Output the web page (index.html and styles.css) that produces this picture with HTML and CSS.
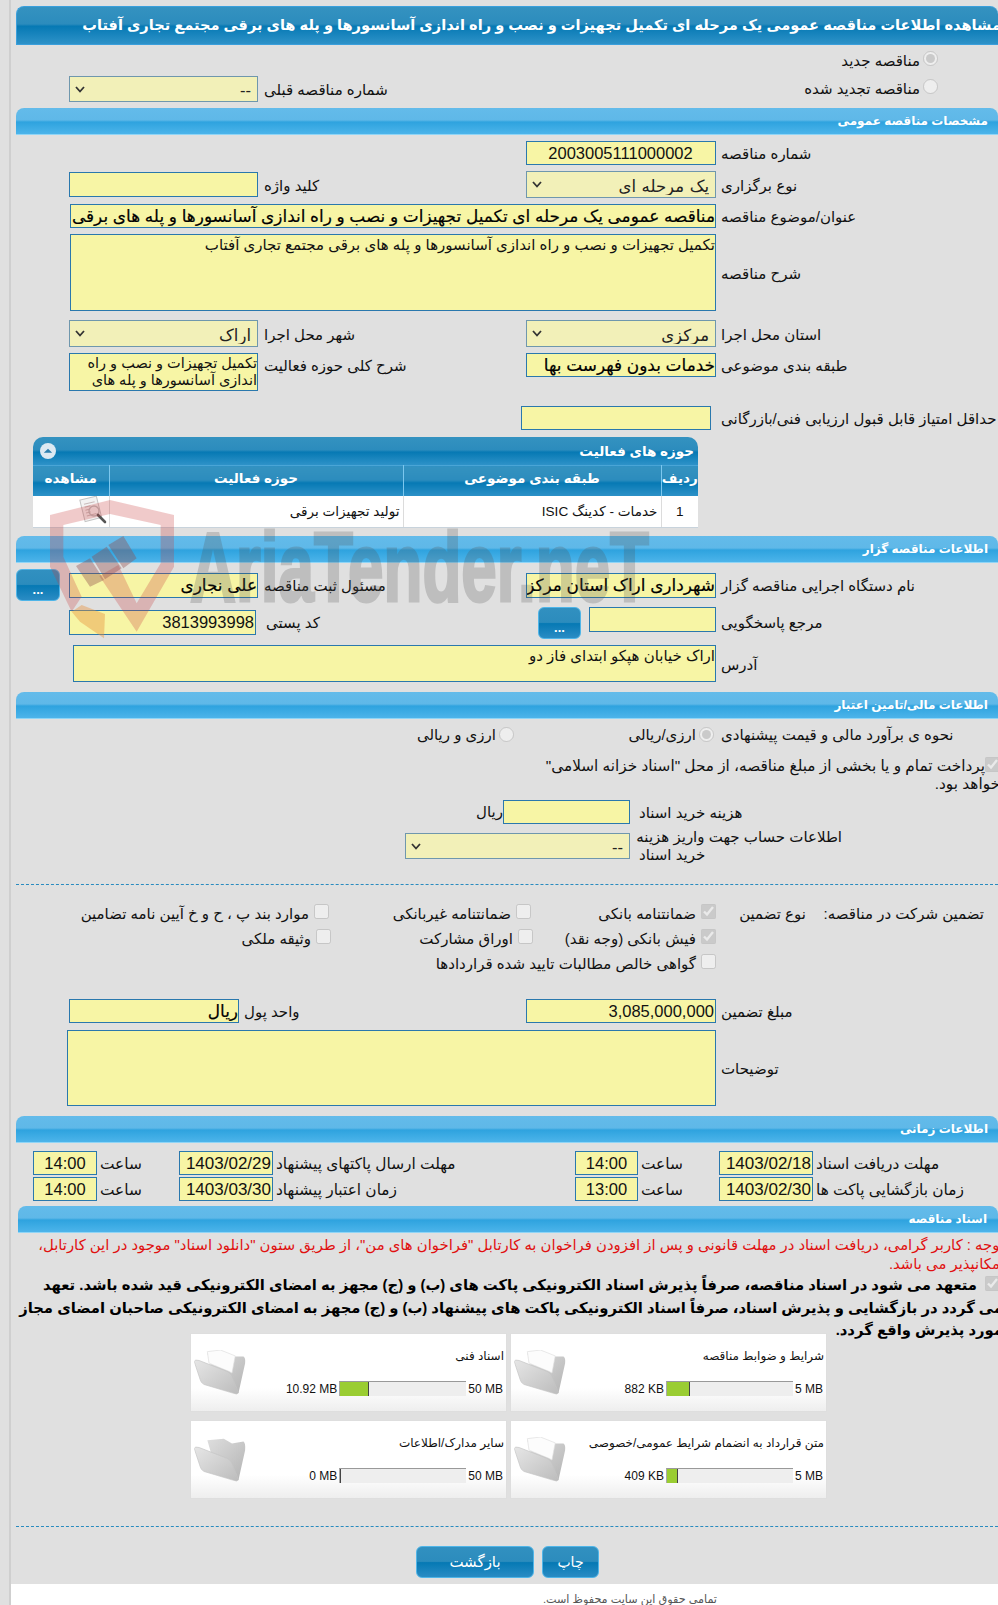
FILE: index.html
```html
<!DOCTYPE html>
<html lang="fa" dir="rtl">
<head>
<meta charset="utf-8">
<title>مشاهده اطلاعات مناقصه</title>
<link rel="stylesheet" href="styles.css">
</head>
<body>
<main class="page">
  <h1 class="title"><span>مشاهده اطلاعات مناقصه عمومی یک مرحله ای تکمیل تجهیزات و نصب و راه اندازی آسانسورها و پله های برقی مجتمع تجاری آفتاب</span></h1>

  <div class="row top-a">
    <label class="opt opt-new"><input type="radio" name="kind" checked disabled>مناقصه جدید</label>
  </div>
  <div class="row top-b">
    <label class="opt opt-new"><input type="radio" name="kind" disabled>مناقصه تجدید شده</label>
    <span></span>
    <span class="lab">شماره مناقصه قبلی</span>
    <select class="sel w189 m6 h26"><option>--</option></select>
  </div>

  <h2 class="sec">مشخصات مناقصه عمومی</h2>

  <div class="row g6 first">
    <span class="lab">شماره مناقصه</span>
    <div class="f w190 m5 num center">2003005111000002</div>
  </div>
  <div class="row g6">
    <span class="lab">نوع برگزاری</span>
    <select class="sel w190 m5"><option>یک مرحله ای</option></select>
    <span class="lab">کلید واژه</span>
    <div class="f w189 m6 h25"></div>
  </div>
  <div class="row g6">
    <span class="lab">عنوان/موضوع مناقصه</span>
    <div class="f span m5 w646 big">مناقصه عمومی یک مرحله ای تکمیل تجهیزات و نصب و راه اندازی آسانسورها و پله های برقی مجتمع تجاری آفتاب</div>
  </div>
  <div class="row g6">
    <span class="lab">شرح مناقصه</span>
    <div class="f span m5 w646 area h77">تکمیل تجهیزات و نصب و راه اندازی آسانسورها و پله های برقی مجتمع تجاری آفتاب</div>
  </div>
  <div class="row g9">
    <span class="lab">استان محل اجرا</span>
    <select class="sel w190 m5"><option>مرکزی</option></select>
    <span class="lab">شهر محل اجرا</span>
    <select class="sel w189 m6"><option>اراک</option></select>
  </div>
  <div class="row g6 tops">
    <span class="lab lh21">طبقه بندی موضوعی</span>
    <div class="f w190 m5 big">خدمات بدون فهرست بها</div>
    <span class="lab lh21">شرح کلی حوزه فعالیت</span>
    <div class="f w189 m6 area h38 tight">تکمیل تجهیزات و نصب و راه اندازی آسانسورها و پله های</div>
  </div>
  <div class="row g15">
    <span class="lab">حداقل امتیاز قابل قبول ارزیابی فنی/بازرگانی</span>
    <div class="f w190 m10"></div>
  </div>

  <section class="grid-box">
    <div class="cap">
      <span>حوزه های فعالیت</span>
      <svg class="cap-ico" viewBox="0 0 16 16" aria-hidden="true"><circle cx="8" cy="8" r="8" fill="#dce9f2"/><path d="M3.8 9.8 8 5.8l4.2 4z" fill="#2c7fae"/></svg>
    </div>
    <table>
      <colgroup><col class="c1"><col class="c2"><col class="c3"><col class="c4"></colgroup>
      <thead><tr><th>ردیف</th><th>طبقه بندی موضوعی</th><th>حوزه فعالیت</th><th>مشاهده</th></tr></thead>
      <tbody><tr>
        <td class="mid">1</td>
        <td>خدمات - کدینگ ISIC</td>
        <td>تولید تجهیزات برقی</td>
        <td class="view">
          <svg viewBox="0 0 32 30" aria-hidden="true">
            <g transform="rotate(-14 13 12)"><rect x="5" y="2" width="17" height="22" fill="#f3f3f3" stroke="#c4c4c4"/><path d="M8 7h11M8 10h6M8 13h5M8 16h5M8 19h10" stroke="#c9bcbc" stroke-width="1"/></g>
            <circle cx="17" cy="15" r="5" fill="none" stroke="#bdbdbd" stroke-width="1.4"/>
            <path d="M21 19l7 7" stroke="#555" stroke-width="2.6" stroke-linecap="round"/>
          </svg>
        </td>
      </tr></tbody>
    </table>
  </section>

  <h2 class="sec g8">اطلاعات مناقصه گزار</h2>

  <div class="row g6">
    <span class="lab">نام دستگاه اجرایی مناقصه گزار</span>
    <div class="f w190 m5 h25 big">شهرداری اراک استان مرکزی</div>
    <span class="lab">مسئول ثبت مناقصه</span>
    <div class="f w189 m6 h25 big">علی نجاری</div>
    <button class="btn dots m9" type="button">...</button>
  </div>
  <div class="row g6 tops h32">
    <span class="lab lh28">مرجع پاسخگویی</span>
    <div class="pair m5">
      <div class="f w127 h25"></div>
      <button class="btn dots" type="button">...</button>
    </div>
    <span class="lab lh28 pl2">کد پستی</span>
    <div class="f w187 m8 h25 num off3">3813993998</div>
  </div>
  <div class="row g6">
    <span class="lab">آدرس</span>
    <div class="f span m5 w643 area h37">اراک خیابان هپکو ابتدای فاز دو</div>
  </div>

  <h2 class="sec g10">اطلاعات مالی/تامین اعتبار</h2>

  <div class="row g7 tops h22">
    <span class="lab lh18">نحوه ی برآورد مالی و قیمت پیشنهادی</span>
    <label class="opt m7"><input type="radio" name="cur" checked disabled>ارزی/ریالی</label>
    <label class="opt m12"><input type="radio" name="cur" disabled>ارزی و ریالی</label>
  </div>
  <p class="treasury"><input type="checkbox" checked disabled>پرداخت تمام و یا بخشی از مبلغ مناقصه، از محل "اسناد خزانه اسلامی"<br>خواهد بود.</p>

  <div class="fee fee-cost">
    <span class="lab">هزینه خرید اسناد</span>
    <div class="pair m9 tightpair"><div class="f w127"></div><span>ریال</span></div>
  </div>
  <div class="fee g4">
    <span class="lab lab2">اطلاعات حساب جهت واریز هزینه<br>خرید اسناد</span>
    <select class="sel w225 m9 h26"><option>--</option></select>
  </div>

  <hr class="dash g20">

  <div class="guar first-g">
    <span class="lab pr14">تضمین شرکت در مناقصه:</span>
    <span class="lab pr9">نوع تضمین</span>
    <label class="chk"><input type="checkbox" checked disabled>ضمانتنامه بانکی</label>
    <label class="chk nudge"><input type="checkbox" disabled>ضمانتنامه غیربانکی</label>
    <label class="chk nudge"><input type="checkbox" disabled>موارد بند پ ، ح و خ آیین نامه تضامین</label>
  </div>
  <div class="guar">
    <span></span><span></span>
    <label class="chk"><input type="checkbox" checked disabled>فیش بانکی (وجه نقد)</label>
    <label class="chk"><input type="checkbox" disabled>اوراق مشارکت</label>
    <label class="chk"><input type="checkbox" disabled>وثیقه ملکی</label>
  </div>
  <div class="guar">
    <span></span><span></span>
    <label class="chk wide"><input type="checkbox" disabled>گواهی خالص مطالبات تایید شده قراردادها</label>
  </div>

  <div class="row g20 unit">
    <span class="lab">مبلغ تضمین</span>
    <div class="f w190 m5 num">3,085,000,000</div>
    <span class="lab">واحد پول</span>
    <div class="f w170 m5 big">ریال</div>
  </div>
  <div class="row g7">
    <span class="lab">توضیحات</span>
    <div class="f span m5 w649 area h76"></div>
  </div>

  <h2 class="sec g10">اطلاعات زمانی</h2>

  <div class="times g8">
    <span class="lab">مهلت دریافت اسناد</span>
    <div class="f date num">1403/02/18</div>
    <span class="lab pl3">ساعت</span>
    <div class="f time num">14:00</div>
    <span class="lab">مهلت ارسال پاکتهای پیشنهاد</span>
    <div class="f date num">1403/02/29</div>
    <span class="lab pl3">ساعت</span>
    <div class="f time num">14:00</div>
  </div>
  <div class="times g2">
    <span class="lab">زمان بازگشایی پاکت ها</span>
    <div class="f date num">1403/02/30</div>
    <span class="lab pl3">ساعت</span>
    <div class="f time num">13:00</div>
    <span class="lab">زمان اعتبار پیشنهاد</span>
    <div class="f date num">1403/03/30</div>
    <span class="lab pl3">ساعت</span>
    <div class="f time num">14:00</div>
  </div>

  <h2 class="sec docs g5">اسناد مناقصه</h2>

  <p class="note">توجه : کاربر گرامی، دریافت اسناد در مهلت قانونی و پس از افزودن فراخوان به کارتابل "فراخوان های من"، از طریق ستون "دانلود اسناد" موجود در این کارتابل،<br>امکانپذیر می باشد.</p>
  <p class="pledge"><input type="checkbox" checked disabled>متعهد می شود در اسناد مناقصه، صرفاً پذیرش اسناد الکترونیکی پاکت های (ب) و (ج) مجهز به امضای الکترونیکی قید شده باشد. تعهد<br>می گردد در بازگشایی و پذیرش اسناد، صرفاً اسناد الکترونیکی پاکت های پیشنهاد (ب) و (ج) مجهز به امضای الکترونیکی صاحبان امضای مجاز<br>مورد پذیرش واقع گردد.</p>

  <div class="cards">
    <article class="card">
      <div class="card-main">
        <div class="card-title">شرایط و ضوابط مناقصه</div>
        <div class="meter"><span class="max">5 MB</span><div class="bar"><i class="fill" style="width:18%"></i></div><span class="cur">882 KB</span></div>
      </div>
      <svg class="folder" viewBox="0 0 157 137" aria-hidden="true"><use href="#folder-full"/></svg>
    </article>
    <article class="card">
      <div class="card-main">
        <div class="card-title">اسناد فنی</div>
        <div class="meter"><span class="max">50 MB</span><div class="bar"><i class="fill" style="width:23%"></i></div><span class="cur">10.92 MB</span></div>
      </div>
      <svg class="folder" viewBox="0 0 157 137" aria-hidden="true"><use href="#folder-full"/></svg>
    </article>
    <article class="card">
      <div class="card-main">
        <div class="card-title">متن قرارداد به انضمام شرایط عمومی/خصوصی</div>
        <div class="meter"><span class="max">5 MB</span><div class="bar"><i class="fill" style="width:9%"></i></div><span class="cur">409 KB</span></div>
      </div>
      <svg class="folder" viewBox="0 0 157 137" aria-hidden="true"><use href="#folder-full"/></svg>
    </article>
    <article class="card">
      <div class="card-main">
        <div class="card-title">سایر مدارک/اطلاعات</div>
        <div class="meter"><span class="max">50 MB</span><div class="bar"><i class="fill" style="width:1px"></i></div><span class="cur">0 MB</span></div>
      </div>
      <svg class="folder" viewBox="0 0 157 137" aria-hidden="true"><use href="#folder-empty"/></svg>
    </article>
  </div>

  <hr class="dash g27">

  <div class="actions">
    <button class="btn print" type="button">چاپ</button>
    <button class="btn back" type="button">بازگشت</button>
  </div>

  <footer class="foot">تمامی حقوق این سایت محفوظ است.</footer>

  <div class="mark" aria-hidden="true">
    <svg class="mark-logo" viewBox="0 0 900 480">
      <path fill="#c83c3c" fill-opacity=".27" d="M30 75 210 30 402 75V230L290 425 178 258 235 225 290 340 362 220V105L210 72 70 105V200L125 320 95 365 30 230Z"/>
      <path fill="#8f4a4a" fill-opacity=".38" d="M108 228 150 205 192 270 150 290ZM155 200 200 170 245 235 195 268ZM205 165 250 138 290 205 250 235Z"/>
      <path fill="#e8913c" fill-opacity=".42" d="M95 365 125 345 195 372 192 445 120 395Z"/>
    </svg>
    <span class="mark-text">AriaTender.neT</span>
  </div>
</main>

<svg class="defs" aria-hidden="true">
  <defs>
    <linearGradient id="fb" x1="0" y1="0" x2="1" y2="1"><stop offset="0" stop-color="#dedede"/><stop offset="1" stop-color="#b4b4b4"/></linearGradient>
    <linearGradient id="ff" x1="0" y1="0" x2="1" y2="1"><stop offset="0" stop-color="#e6e6e6"/><stop offset="1" stop-color="#bcbcbc"/></linearGradient>
    <symbol id="folder-full" viewBox="0 0 157 137">
      <path d="M40 10 120 20 150 20Q157 25 155 40L135 130 60 80Z" fill="url(#fb)"/>
      <path d="M40 5 80 0 125 18 115 70 105 65 45 40Z" fill="#fcfcfc" stroke="#dedede" stroke-width="2"/>
      <path d="M0 35Q2 28 15 32L100 65Q112 70 115 80L135 130Q130 137 120 132L30 105Q20 100 18 90Z" fill="url(#ff)" stroke="#c4c4c4" stroke-width="2"/>
    </symbol>
    <symbol id="folder-empty" viewBox="0 0 157 137">
      <path d="M40 10 90 5 115 20 150 14Q157 20 155 40L135 130 60 80Z" fill="url(#fb)"/>
      <path d="M0 35Q2 28 15 32L100 65Q112 70 115 80L135 130Q130 137 120 132L30 105Q20 100 18 90Z" fill="url(#ff)" stroke="#c4c4c4" stroke-width="2"/>
    </symbol>
  </defs>
</svg>
</body>
</html>
```
FILE: styles.css
```css
* { box-sizing: border-box; }
html, body { margin: 0; height: 1605px; overflow: hidden; background: #e0e0e0; }
body {
  direction: rtl;
  font-family: "Liberation Sans", "DejaVu Sans", sans-serif;
  font-size: 15px;
  color: #111;
  padding-left: 9px;
}
.page {
  position: relative;
  width: 989px;
  height: 1605px;
  overflow: hidden;
  border-left: 2px solid #cfcfcf;
}
p, h1, h2, hr { margin: 0; }

.title {
  height: 39px;
  margin: 6px 0 0 5px;
  overflow: hidden;
  white-space: nowrap;
  font-size: 14.6px;
  line-height: 37px;
  color: #fff;
  border-radius: 8px 8px 0 0;
  border: 1px solid #3a9fdc;
  border-width: 1px 0 1px 1px;
  background: linear-gradient(#3492c0, #2c8cbd 46%, #0679b4 52%, #2e92c8);
}
.title span { display: inline-block; margin-right: -3px; }

.sec {
  height: 27px;
  margin-left: 5px;
  padding: 0 10px 3px 0;
  font-size: 12px;
  line-height: 27px;
  font-weight: bold;
  color: #fff;
  border-radius: 8px 8px 0 0;
  border-bottom: 1px solid #90d5f6;
  background: linear-gradient(#63bbea, #5fb8e8 46%, #2ea3df 54%, #4cb4ea);
}
.sec.docs { margin-left: 7px; margin-top: 5px; padding-right: 11px; }

.row {
  display: grid;
  grid-template-columns: 277px 195px 262px 195px 59px;
  align-items: center;
}
.row.unit { grid-template-columns: 277px 195px 282px 175px 59px; }
.tops { align-items: start; }
.top-a { height: 26px; margin-top: 3px; align-items: start; }
.top-b { height: 26px; margin-top: 1px; margin-bottom: 7px; }
.first { margin-top: 6px; }
.g2 { margin-top: 2px; } .g4 { margin-top: 4px; } .g5 { margin-top: 5px; } .g6 { margin-top: 6px; }
.g7 { margin-top: 7px; } .g8 { margin-top: 8px; } .g9 { margin-top: 9px; } .g10 { margin-top: 10px; }
.g15 { margin-top: 15px; } .g20 { margin-top: 20px; } .g27 { margin-top: 27px; }
.h32 { height: 32px; } .h22 { height: 22px; }

.lab { text-align: left; white-space: nowrap; padding-top: 2px; }
.lh18 { line-height: 18px; padding-top: 0; } .lh21 { line-height: 21px; } .lh28 { line-height: 28px; }
.pl2 { padding-left: 2px; } .pl3 { padding-left: 3px; }
.pr14 { text-align: right; padding-right: 14px; } .pr9 { text-align: right; padding-right: 9px; }

.f {
  height: 24px;
  background: #f7f5a5;
  border: 1px solid #2a78ad;
  line-height: 23px;
  white-space: nowrap;
  overflow: hidden;
}
.big { font-size: 16.9px; color: #000; -webkit-text-stroke: .2px #000; }
.num { font-size: 16.5px; padding: 0 1px; }
.date.num { font-size: 17px; }
.center { text-align: center; padding-left: 0; }
.area { white-space: normal; line-height: 18px; padding-top: 1px; }
.tight { line-height: 17px; font-size: 14.5px; }
.span { grid-column: 2 / 6; }
.w127 { width: 127px; } .w170 { width: 170px; } .w187 { width: 187px; } .w189 { width: 189px; }
.w190 { width: 190px; } .w225 { width: 225px; } .w643 { width: 643px; } .w646 { width: 646px; } .w649 { width: 649px; }
.m5 { margin-right: 5px; } .m6 { margin-right: 6px; } .m7 { margin-right: 7px; } .m8 { margin-right: 8px; }
.m9 { margin-right: 9px; } .m10 { margin-right: 10px; } .m12 { margin-right: 12px; }
.h25 { height: 25px; } .h37 { height: 37px; } .h38 { height: 38px; } .h76 { height: 76px; } .h77 { height: 77px; }
.off3 { margin-top: 3px; }

.sel {
  height: 27px;
  padding: 2px 6px 0 20px;
  font: inherit;
  font-size: 16.5px;
  word-spacing: 1px;
  color: #222;
  appearance: none;
  -webkit-appearance: none;
  background: #f2f0b8 url("data:image/svg+xml,%3Csvg xmlns='http://www.w3.org/2000/svg' width='10' height='7'%3E%3Cpath d='M1 1l4 4.5L9 1' fill='none' stroke='%23333' stroke-width='1.8'/%3E%3C/svg%3E") no-repeat 5px 50%;
  border: 1px solid #6f97ad;
  border-radius: 0;
}
.sel.h26 { height: 26px; }

.opt { display: flex; align-items: flex-start; gap: 3px; line-height: 18px; white-space: nowrap; }
.opt-new { margin-right: 60px; line-height: 26px; }
.top-b .opt-new { line-height: 28px; }
.opt input { width: 15px; height: 15px; margin: 1px 0 0; flex: none; }
.opt-new input { margin-top: 3px; }
.top-b .opt-new input { margin-top: 4px; }

.pair { display: flex; gap: 8px; align-items: flex-start; }
.tightpair { gap: 0; align-items: center; }

.btn {
  font: inherit;
  color: #fff;
  border: 1px solid #4fb5e8;
  border-radius: 6px;
  padding: 0;
  background: linear-gradient(#3190c0, #2c8cbd 48%, #0679b4 52%, #2a8cc4);
}
.dots { width: 44px; height: 32px; padding-top: 10px; line-height: 12px; font-size: 13px; font-weight: bold; }
.pair .dots { width: 43px; }

.grid-box {
  width: 665px;
  margin: 7px 300px 0 0;
  border-radius: 10px 10px 0 0;
  overflow: hidden;
}
.cap {
  display: flex;
  justify-content: space-between;
  align-items: center;
  height: 28px;
  padding: 0 4px 0 7px;
  color: #fff;
  font-weight: bold;
  font-size: 13.5px;
  background: linear-gradient(#3492c0, #2c8cbd 46%, #0679b4 54%, #2e92c8);
}
.cap-ico { width: 16px; height: 16px; }
table { width: 665px; border-collapse: collapse; table-layout: fixed; background: #fff; }
.c1 { width: 37px; } .c2 { width: 258px; } .c3 { width: 294px; } .c4 { width: 76px; }
th {
  height: 30px;
  padding: 0 0 5px;
  color: #fff;
  font-size: 13.5px;
  border-left: 1px solid #7cc7ee;
  border-top: 1px solid #4aa5d6;
  background: linear-gradient(#3492c0, #2c8cbd 46%, #0679b4 54%, #2e92c8);
}
th:last-child { border-left: 0; }
td {
  height: 32px;
  padding: 0 3px;
  text-align: right;
  font-size: 13.6px;
  border-left: 1px solid #dcdcdc;
  border-bottom: 1px solid #c8d3dc;
}
td:last-child { border-left: 0; }
td.mid { text-align: center; }
td.view { padding: 0; }
td.view svg { display: block; width: 32px; height: 30px; }

.treasury { margin: 9px -4px 0 0; padding-right: 2px; line-height: 18px; white-space: nowrap; font-size: 15.3px; }
.treasury input { width: 15px; height: 15px; margin: 0; vertical-align: -1px; }
.fee {
  display: grid;
  grid-template-columns: 203px auto;
  justify-content: start;
  align-items: center;
  margin-right: 156px;
}
.fee-cost { margin-top: 7px; }
.lab2 { line-height: 18px; padding-top: 0; }

.dash { border: 0; border-top: 1px dashed #2a8bbf; margin-left: 5px; height: 1px; }

.guar {
  display: grid;
  grid-template-columns: 183px 99px 183px 202px 321px;
  height: 25px;
  line-height: 20px;
}
.guar .lab { padding-top: 0; }
.first-g { margin-top: 19px; }
.chk { display: flex; align-items: flex-start; gap: 5px; white-space: nowrap; }
.chk input { width: 15px; height: 15px; margin: 0; flex: none; }
.nudge { padding-right: 2px; }
.wide { grid-column: 3 / 6; }

.times {
  display: grid;
  grid-template-columns: 182px 97px 81px 63px 299px 98px 81px 64px;
  align-items: center;
}
.times .lab { font-size: 15.4px; }
.date { width: 94px; margin-right: 3px; }
.time { width: 100%; text-align: center; }

.note { margin: 3px -6px 0 0; color: #e01010; line-height: 19px; white-space: nowrap; font-size: 14.85px; }
.pledge { height: 59px; margin: 0 -5px 0 0; line-height: 22.5px; white-space: nowrap; font-size: 14.8px; font-weight: bold; color: #000; }
.pledge input { width: 15px; height: 15px; margin: 0 3px 0 8px; vertical-align: -1px; }

.cards {
  display: grid;
  grid-template-columns: 317px 317px;
  grid-auto-rows: 79px;
  gap: 8px 3px;
  margin-right: 171px;
}
.card {
  display: flex;
  justify-content: space-between;
  padding: 0 3px 0 3px;
  border: 1px solid #dedede;
  background: linear-gradient(#fff 70%, #eee);
}
.card-main { flex: 1; padding-top: 13px; }
.card-title { font-size: 12px; line-height: 18px; white-space: nowrap; margin-right: -1px; }
.meter { display: flex; align-items: center; gap: 2px; margin-top: 16px; font-size: 12px; }
.max, .cur { direction: ltr; unicode-bidi: isolate; }
.bar { position: relative; width: 127px; height: 15px; background: #eee; border-top: 1px solid #999; border-left: 1px solid #aaa; direction: ltr; }
.fill { display: block; height: 100%; background: #9acd32; border-right: 1px solid #444; }
.folder { width: 52px; height: 45px; margin-top: 16px; flex: none; }

.actions { display: flex; gap: 8px; margin: 19px 399px 0 0; height: 32px; }
.print { width: 57px; font-size: 14px; }
.back { width: 118px; font-size: 15px; }

.foot {
  height: 30px;
  margin-top: 6px;
  padding: 9px 281px 0 0;
  background: #fff;
  font-size: 11.2px;
  color: #555;
}

.mark { position: absolute; left: 29px; top: 490px; width: 640px; height: 160px; pointer-events: none; }
.mark-logo { position: absolute; left: 0; top: 0; width: 300px; height: 160px; }
.mark-text {
  position: absolute;
  left: 150px;
  top: 27px;
  direction: ltr;
  font: bold 98px/100px "Liberation Sans", sans-serif;
  color: #505050;
  -webkit-text-stroke: 3px #505050;
  opacity: .23;
  white-space: nowrap;
  transform: scaleX(.65);
  transform-origin: 0 0;
}
.defs { position: absolute; width: 0; height: 0; }
```
